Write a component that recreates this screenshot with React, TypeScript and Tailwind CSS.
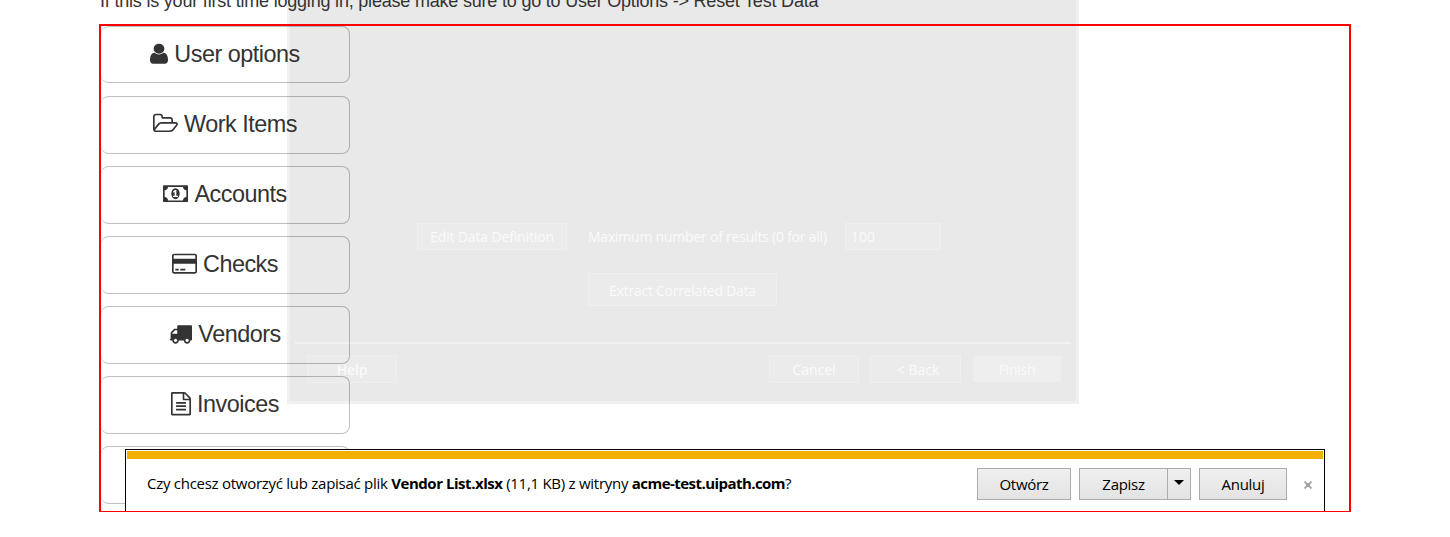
import React from "react";

type MenuItem = { label: string; icon: string; viewBox: string; size: string };

const menu: MenuItem[] = [
  {
    label: "User options",
    viewBox: "256 0 1280 1792",
    size: "w-[18px]",
    icon: "M1536 1399q0 109-62.5 187t-150.5 78h-854q-88 0-150.5-78t-62.5-187q0-85 8.5-160.5t31.5-152 58.5-131 94-89 134.5-34.5q131 128 313 128t313-128q76 0 134.5 34.5t94 89 58.5 131 31.5 152 8.5 160.5zm-256-887q0 159-112.5 271.5t-271.5 112.5-271.5-112.5-112.5-271.5 112.5-271.5 271.5-112.5 271.5 112.5 112.5 271.5z",
  },
  {
    label: "Work Items",
    viewBox: "64 0 1920 1792",
    size: "w-[25px]",
    icon: "M1845 931q0-35-53-35h-1088q-40 0-85.5 21.5t-71.5 52.5l-294 363q-18 24-18 40 0 35 53 35h1088q40 0 86-22t71-53l294-363q18-22 18-39zm-1141-163h768v-160q0-40-28-68t-68-28h-576q-40 0-68-28t-28-68v-64q0-40-28-68t-68-28h-320q-40 0-68 28t-28 68v853l256-315q44-53 116-87.5t140-34.5zm1269 163q0 62-46 120l-295 363q-43 53-116 87.5t-140 34.5h-1088q-92 0-158-66t-66-158v-960q0-92 66-158t158-66h320q92 0 158 66t66 158v32h544q92 0 158 66t66 158v160h192q54 0 99 24.5t67 70.5q15 32 15 68z",
  },
  {
    label: "Accounts",
    viewBox: "0 0 1920 1792",
    size: "w-[25px]",
    icon: "M768 1152h384v-96h-128v-448h-114l-148 137 77 80q42-37 55-57h2v288h-128v96zm512-256q0 70-21 142t-59.5 134-101.5 101-138 39-138-39-101.5-101-59.5-134-21-142 21-142 59.5-134 101.5-101 138-39 138 39 101.5 101 59.5 134 21 142zm512 256v-512q-106 0-181-75t-75-181h-1152q0 106-75 181t-181 75v512q106 0 181 75t75 181h1152q0-106 75-181t181-75zm128-832v1152q0 26-19 45t-45 19h-1792q-26 0-45-19t-19-45v-1152q0-26 19-45t45-19h1792q26 0 45 19t19 45z",
  },
  {
    label: "Checks",
    viewBox: "0 0 1920 1792",
    size: "w-[25px]",
    icon: "M1760 128q66 0 113 47t47 113v1216q0 66-47 113t-113 47h-1600q-66 0-113-47t-47-113v-1216q0-66 47-113t113-47h1600zm-1600 128q-13 0-22.5 9.5t-9.5 22.5v224h1664v-224q0-13-9.5-22.5t-22.5-9.5h-1600zm1600 1280q13 0 22.5-9.5t9.5-22.5v-608h-1664v608q0 13 9.5 22.5t22.5 9.5h1600zm-1504-128v-128h256v128h-256zm384 0v-128h384v128h-384z",
  },
  {
    label: "Vendors",
    viewBox: "0 0 1792 1792",
    size: "w-[23px]",
    icon: "M640 1408q0-52-38-90t-90-38-90 38-38 90 38 90 90 38 90-38 38-90zm-384-512h384v-256h-158q-13 0-22 9l-195 195q-9 9-9 22v30zm1280 512q0-52-38-90t-90-38-90 38-38 90 38 90 90 38 90-38 38-90zm256-1088v1024q0 15-4 26.5t-13.5 18.5-16.5 11.5-23.5 6-22.5 2-25.5 0-22.5-.5q0 106-75 181t-181 75-181-75-75-181h-384q0 106-75 181t-181 75-181-75-75-181h-64q-3 0-22.5.5t-25.5 0-22.5-2-23.5-6-16.5-11.5-13.5-18.5-4-26.5q0-26 19-45t45-19v-320q0-8-.5-35t0-38 2.5-34.5 6.5-37 14-30.5 22.5-30l198-198q19-19 50.5-32t58.5-13h160v-192q0-26 19-45t45-19h1024q26 0 45 19t19 45z",
  },
  {
    label: "Invoices",
    viewBox: "128 0 1536 1792",
    size: "w-[20px]",
    icon: "M1596 380q28 28 48 76t20 88v1152q0 40-28 68t-68 28h-1344q-40 0-68-28t-28-68v-1600q0-40 28-68t68-28h896q40 0 88 20t76 48zm-444-244v376h376q-10-29-22-41l-313-313q-12-12-41-22zm384 1528v-1024h-416q-40 0-68-28t-28-68v-416h-768v1536h1280zm-1024-864q0-14 9-23t23-9h704q14 0 23 9t9 23v64q0 14-9 23t-23 9h-704q-14 0-23-9t-9-23v-64zm736 224q14 0 23 9t9 23v64q0 14-9 23t-23 9h-704q-14 0-23-9t-9-23v-64q0-14 9-23t23-9h704zm0 256q14 0 23 9t9 23v64q0 14-9 23t-23 9h-704q-14 0-23-9t-9-23v-64q0-14 9-23t23-9h704z",
  },
];

const cell = "w-[249px] shrink-0 rounded-lg border border-l-0 border-black/25";

function Wizard() {
  const button = "flex items-center justify-center border border-[#efefef] bg-[#ebebeb]";
  return (
    <div className="absolute left-[287px] top-0 flex h-[404px] w-[792px] flex-col border-x-3 border-b-3 border-[#eef0f2] bg-[#e9e9e9] px-[5px] pt-[223px] font-['Open_Sans',sans-serif] text-[14px] leading-none text-[#fafafa]">
      <div className="flex h-[27px] items-center pl-[122px]">
        <div className={`${button} h-[27px] w-[150px] tracking-[-0.15px]`}>Edit Data Definition</div>
        <div className="ml-[21px] w-[257px] whitespace-nowrap tracking-[-0.22px]">Maximum number of results (0 for all)</div>
        <div className="flex h-[27px] w-[96px] items-center border border-[#efefef] bg-[#ebebeb] pl-[5px]">100</div>
      </div>
      <div className={`${button} ml-[293px] mt-[23px] h-[33px] w-[189px] pt-[2px] tracking-[-0.25px]`}>
        Extract Correlated Data
      </div>
      <div className="mt-[36px] h-[2px] shrink-0 bg-[#f2f2f2]" />
      <div className="mt-[11px] flex h-[28px] pl-[12px]">
        <div className={`${button} w-[90px] pt-[2px] font-semibold tracking-[-0.2px]`}>Help</div>
        <div className={`${button} ml-[372px] w-[90px] pt-[2px]`}>Cancel</div>
        <div className={`${button} ml-[11px] w-[91px] pl-[5px] pt-[2px]`}>&lt; Back</div>
        <div className="ml-[12px] mt-px flex h-[26px] w-[88px] items-center justify-center bg-[#eeeeee] pt-[2px] tracking-[-0.2px]">
          Finish
        </div>
      </div>
    </div>
  );
}

function DownloadBar() {
  const button =
    "flex h-[32px] items-center justify-center border border-[#ababab] bg-linear-to-b from-[#f0f0f0] to-[#e3e3e3] tracking-[-0.3px]";
  return (
    <div className="absolute left-[125px] top-[449px] h-[62px] w-[1200px] border border-b-0 border-black bg-white px-px pt-px font-['Open_Sans',sans-serif] text-[15px] leading-none text-black">
      <div className="h-[8px] bg-[#f4b000]" />
      <div className="mt-[9px] flex h-[32px] items-center pl-[20px]">
        <div className="w-[830px] whitespace-nowrap pb-[2px] tracking-[-0.27px]">
          Czy chcesz otworzyć lub zapisać plik <b className="tracking-[-0.46px]">Vendor List.xlsx</b> (11,1 KB) z witryny{" "}
          <b className="tracking-[-0.55px]">acme-test.uipath.com</b>?
        </div>
        <div className={`${button} w-[94px]`}>Otwórz</div>
        <div className="ml-[8px] flex">
          <div className={`${button} w-[89px]`}>Zapisz</div>
          <div className={`${button} -ml-px w-[24px]`}>
            <svg className="mb-[3px] h-[5px] w-[10px]" viewBox="0 0 10 5">
              <path d="M0 0h10L5 5z" />
            </svg>
          </div>
        </div>
        <div className={`${button} ml-[8px] w-[88px]`}>Anuluj</div>
        <svg className="ml-[17px] mt-[2px] h-[8px] w-[8px]" viewBox="0 0 8 8" fill="none" stroke="#a3a3a3" strokeWidth="1.9">
          <path d="M.5.5l7 7M7.5.5l-7 7" />
          <path d="M2.5 2.5h3v3h-3z" strokeWidth="1" />
        </svg>
      </div>
    </div>
  );
}

export default function App() {
  return (
    <div className="relative h-[537px] w-[1450px] overflow-hidden bg-white font-['Liberation_Sans',Arial,sans-serif] text-[#333]">
      <Wizard />
      <div className="relative flex h-[537px] flex-col">
        <div className="-mt-[9px] h-[33px] shrink-0 whitespace-nowrap pl-[100px] text-[18px] leading-[20px] tracking-[-0.2px]">
          If this is your first time logging in, please make sure to go to User Options -&gt; Reset Test Data
        </div>
        <div className="ml-[99px] flex h-[488px] w-[1252px] flex-col gap-[12px] border-2 border-b border-[#ff0000]">
          {menu.map((m, i) => (
            <div
              key={m.label}
              className={`${cell} flex items-center justify-center gap-[6px] pb-[2px] ${i === 0 ? "h-[57px] mb-px" : "h-[58px]"}`}
            >
              <svg className={`h-[23.4px] ${m.size}`} viewBox={m.viewBox} preserveAspectRatio="none" fill="currentColor">
                <path d={m.icon} />
              </svg>
              <span className="whitespace-nowrap text-[23.4px] leading-[28px] tracking-[-0.5px]">{m.label}</span>
            </div>
          ))}
          <div className={`${cell} h-[58px]`} />
        </div>
      </div>
      <DownloadBar />
    </div>
  );
}
